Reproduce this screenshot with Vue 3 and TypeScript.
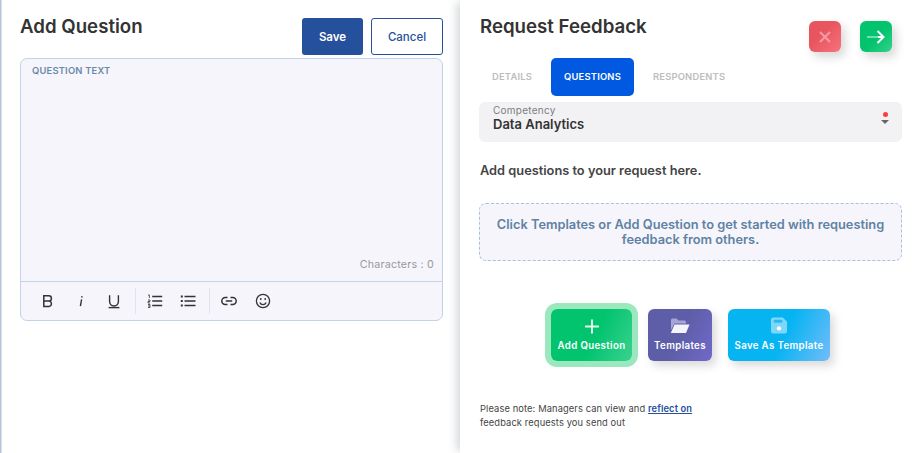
<script setup lang="ts">
const tabs = [
  { label: 'DETAILS', active: false },
  { label: 'QUESTIONS', active: true },
  { label: 'RESPONDENTS', active: false },
]
</script>

<template>
  <div class="page">
    <section class="left">
      <header class="left-head">
        <h1>Add Question</h1>
        <div class="head-actions">
          <button class="btn save">Save</button>
          <button class="btn cancel">Cancel</button>
        </div>
      </header>
      <div class="editor">
        <div class="editor-body">
          <div class="q-label">QUESTION TEXT</div>
          <div class="count">Characters : 0</div>
        </div>
        <div class="toolbar">
          <div class="tool-group first">
            <span class="tool"><svg width="16" height="16" viewBox="0 0 16 16" fill="none" stroke="#333" stroke-width="1.5"><path d="M3.8 2.8h5a2.6 2.6 0 0 1 0 5.2h-5zM3.8 8h5.6a2.8 2.8 0 0 1 0 5.4H3.8zM3.8 2.8v10.6"/></svg></span>
            <span class="tool"><svg width="16" height="16" viewBox="0 0 16 16" fill="none" stroke="#333" stroke-width="1.4"><path d="M8.6 6.4 7.4 13.2"/><path d="M9 3.2 8.8 4.6"/></svg></span>
            <span class="tool"><svg width="16" height="16" viewBox="0 0 16 16" fill="none" stroke="#333" stroke-width="1.4"><path d="M3.6 2.2v6.4a4.4 4.4 0 0 0 8.8 0V2.2"/><path d="M2.6 14.6h10.8"/></svg></span>
          </div>
          <div class="tool-group mid">
            <span class="tool"><svg width="16" height="16" viewBox="0 0 16 16" fill="none" stroke="#333"><path d="M5.2 3.5h10M5.2 8h10M5.2 12.500h10" stroke-width="1.7"/><path d="M1 2h1.400v3M1 7h2v1.500H1V10h2M1 11.500h2v3H1M1 13h2" stroke-width=".8"/></svg></span>
            <span class="tool"><svg width="16" height="16" viewBox="0 0 16 16" fill="none" stroke="#333"><path d="M4.500 3.500h11M4.500 8h11M4.500 12.500h11" stroke-width="1.700"/><path d="M.8 3.500h2M.8 8h2M.8 12.500h2" stroke-width="2"/></svg></span>
          </div>
          <div class="tool-group last">
            <span class="tool"><svg width="16" height="16" viewBox="0 0 16 16" fill="none" stroke="#333" stroke-width="1.500"><path d="M6.500 4.500H4.300a3.500 3.500 0 0 0 0 7h2.200M9.500 4.500h2.200a3.500 3.500 0 0 1 0 7H9.500M4.800 8h6.400"/></svg></span>
            <span class="tool"><svg width="16" height="16" viewBox="0 0 16 16" fill="none" stroke="#333" stroke-width="1.300"><circle cx="8" cy="8" r="6.600"/><path d="M4.800 9.400c.7 1.500 1.800 2.200 3.200 2.200s2.500-.7 3.200-2.200"/><circle cx="5.800" cy="6" r=".9" fill="#333" stroke="none"/><circle cx="10.200" cy="6" r=".9" fill="#333" stroke="none"/></svg></span>
          </div>
        </div>
      </div>
    </section>

    <section class="right">
      <header class="right-head">
        <h1>Request Feedback</h1>
        <div class="icon-actions">
          <button class="square red" aria-label="Close">
            <svg width="16" height="16" viewBox="0 0 16 16" fill="none" stroke="#f59aa3" stroke-width="2.200"><path d="M3 3l10 10M13 3 3 13"/></svg>
          </button>
          <button class="square green" aria-label="Next">
            <svg width="18" height="14" viewBox="0 0 18 14" fill="none" stroke-width="2"><path d="M0 7h12" stroke="#6fe0ad"/><path d="M11 7h5.500M10.500 1l6 6-6 6" stroke="#fff"/></svg>
          </button>
        </div>
      </header>

      <nav class="tabs">
        <span v-for="t in tabs" :key="t.label" class="tab" :class="{ active: t.active }">{{ t.label }}</span>
      </nav>

      <div class="select">
        <div>
          <div class="sel-label">Competency</div>
          <div class="sel-value">Data Analytics</div>
        </div>
        <div class="sel-marks">
          <span class="dot"></span>
          <span class="caret"></span>
        </div>
      </div>

      <p class="hint">Add questions to your request here.</p>

      <div class="empty">Click Templates or Add Question to get started with requesting feedback from others.</div>

      <div class="actions">
        <button class="action add">
          <svg width="18" height="18" viewBox="0 0 18 18" stroke="#e0f8ec" stroke-width="2"><path d="M9 3.500v14M2 10.500h14"/></svg>
          <span>Add Question</span>
        </button>
        <button class="action tpl">
          <svg width="20" height="16" viewBox="0 0 20 16"><path d="M1 2a1.500 1.500 0 0 1 1.500-1.500h4L8.500 2.500h6A1.500 1.500 0 0 1 16 4v1.500H4.500L1 12z" fill="#a7a5d6"/><path d="M4.500 6.500H19.500L16 15H.8z" fill="#f4f4fb"/></svg>
          <span>Templates</span>
        </button>
        <button class="action sat">
          <svg width="18" height="17" viewBox="0 0 18 18"><path d="M3 .5h10L17.500 5v10a2.500 2.500 0 0 1-2.500 2.500H3A2.500 2.500 0 0 1 .5 15V3A2.500 2.500 0 0 1 3 .5z" fill="#7dd7f8"/><rect x="3.500" y="3" width="9" height="3" rx=".8" fill="#2db8ee"/><circle cx="9" cy="12" r="2.300" fill="#fff"/></svg>
          <span>Save As Template</span>
        </button>
      </div>

      <p class="note">Please note: Managers can view and <a href="#" @click.prevent>reflect on</a><br />feedback requests you send out</p>
    </section>
  </div>
</template>

<style>
html, body { margin: 0; background: #fff; overflow: hidden; }
</style>

<style scoped>
* { box-sizing: border-box; }
.page {
  width: 917px;
  height: 453px;
  display: flex;
  font-family: Inter, "Liberation Sans", sans-serif;
  color: #333;
  overflow: hidden;
}
h1 { margin: 0; font-size: 18.670px; font-weight: 600; line-height: 22px; color: #333; }
button { font-family: inherit; cursor: pointer; border: 0; padding: 0; }

.left {
  width: 460px;
  flex: none;
  padding: 0 17px 0 20px;
  background: linear-gradient(90deg, #b7c5d6 0, #b7c5d6 1px, #fff 2px);
}
.left-head { height: 58px; display: flex; justify-content: space-between; }
.left-head h1 { margin-top: 16px; }
.head-actions { display: flex; gap: 8px; padding-top: 18px; height: 55px; }
.btn { height: 37px; border-radius: 3px; font-size: 11.500px; font-weight: 600; }
.save { width: 61px; background: #25509c; color: #fff; }
.cancel { width: 72px; background: #fff; color: #25509c; border: 1px solid #25509c; font-weight: 500; }

.editor {
  height: 263px;
  border: 1px solid #c0d4e8;
  border-radius: 7px;
  background: #f6f5fc;
  display: flex;
  flex-direction: column;
}
.editor-body { height: 223px; padding: 6px 11px 0; display: flex; flex-direction: column; border-bottom: 1px solid #c0d4e8; }
.q-label { font-size: 9.400px; line-height: 11px; font-weight: 600; color: #688aa8; letter-spacing: .2px; }
.count { margin-top: auto; margin-bottom: 10px; align-self: flex-end; margin-right: -3px; font-size: 10.700px; line-height: 13px; color: #999; letter-spacing: .2px; }
.toolbar { flex: 1; display: flex; align-items: center; padding-left: 10px; }
.tool-group { display: flex; height: 26px; align-items: center; gap: 17px; padding: 0 11px; border-right: 1px solid #e2e3ec; }
.tool-group.first { padding: 0 13px 0 9px; }
.tool-group.mid { padding: 0 13px 0 11px; }
.tool-group.last { border-right: 0; gap: 18px; padding: 0 11px; }
.tool { width: 16px; height: 16px; display: block; }
.tool svg { display: block; }

.right {
  flex: 1;
  padding: 0 15px 0 19px;
  background: #fff;
  box-shadow: -6px 0 8px -2px rgba(120, 130, 140, .28);
  position: relative;
}
.right-head { height: 58px; display: flex; justify-content: space-between; }
.right-head h1 { margin-top: 16px; margin-left: 1px; }
.icon-actions { display: flex; gap: 19px; padding-top: 21px; margin-right: 10px; }
.square { width: 32px; height: 31px; border-radius: 6px; display: flex; align-items: center; justify-content: center; box-shadow: 4px 5px 10px rgba(90, 90, 90, .24); }
.red { background: linear-gradient(135deg, #e8555f 40%, #f8737d 100%); }
.green { background: linear-gradient(135deg, #04c36f 55%, #35d28a 100%); }

.tabs { display: flex; height: 38px; align-items: center; }
.tab { padding: 0 13px; font-size: 9.400px; font-weight: 600; color: #bdbdbd; height: 38px; line-height: 38px; letter-spacing: .2px; }
.tab.active { background: #0059e0; color: #fff; border-radius: 5px; margin: 0 6px; }

.select {
  margin-top: 6px;
  height: 40px;
  border-radius: 6px;
  background: #f2f2f4;
  padding: 2px 13px 0 14px;
  display: flex;
  justify-content: space-between;
}
.sel-label { font-size: 10px; line-height: 12px; color: #7d7d7d; letter-spacing: .25px; }
.sel-value { font-size: 13px; line-height: 16px; font-weight: 600; color: #333; }
.sel-marks { display: flex; flex-direction: column; align-items: center; padding-top: 8px; gap: 3px; }
.dot { width: 5px; height: 5px; border-radius: 50%; background: #ff3b3b; }
.caret { width: 0; height: 0; border: 4px solid transparent; border-top: 4px solid #666; border-bottom: 0; }

.hint { margin: 20px 0 0 1px; font-size: 12.800px; line-height: 17px; font-weight: 600; color: #444; }

.empty {
  margin-top: 24px;
  height: 58px;
  border: 1px dashed #a9c0d8;
  border-radius: 7px;
  background: #f6f5fc;
  padding: 13px 12px 0;
  text-align: center;
  font-size: 12.800px;
  line-height: 15px;
  font-weight: 600;
  color: #5f82a3;
}

.actions { margin-top: 48px; padding-left: 72px; display: flex; gap: 16px; }
.action {
  height: 52px;
  border-radius: 6px;
  color: #fff;
  font-size: 9.700px;
  font-weight: 600;
  letter-spacing: .35px;
  display: flex;
  flex-direction: column;
  align-items: center;
  justify-content: flex-end;
  padding-bottom: 10px;
  gap: 6px;
  box-shadow: 4px 5px 9px rgba(90, 90, 90, .22);
}
.add { width: 81px; background: linear-gradient(115deg, #02c46f 55%, #3ad28f 100%); box-shadow: 0 0 0 6px #9be8bf; }
.tpl { width: 64px; background: linear-gradient(115deg, #5e5ea8 50%, #7069c9 100%); }
.sat { width: 102px; background: linear-gradient(115deg, #07b4f2 55%, #74bcfa 100%); }

.note { margin: 41px 0 0 1px; font-size: 9.300px; line-height: 14px; color: #444; letter-spacing: .12px; }
.note a { color: #25509c; font-weight: 600; }
</style>
